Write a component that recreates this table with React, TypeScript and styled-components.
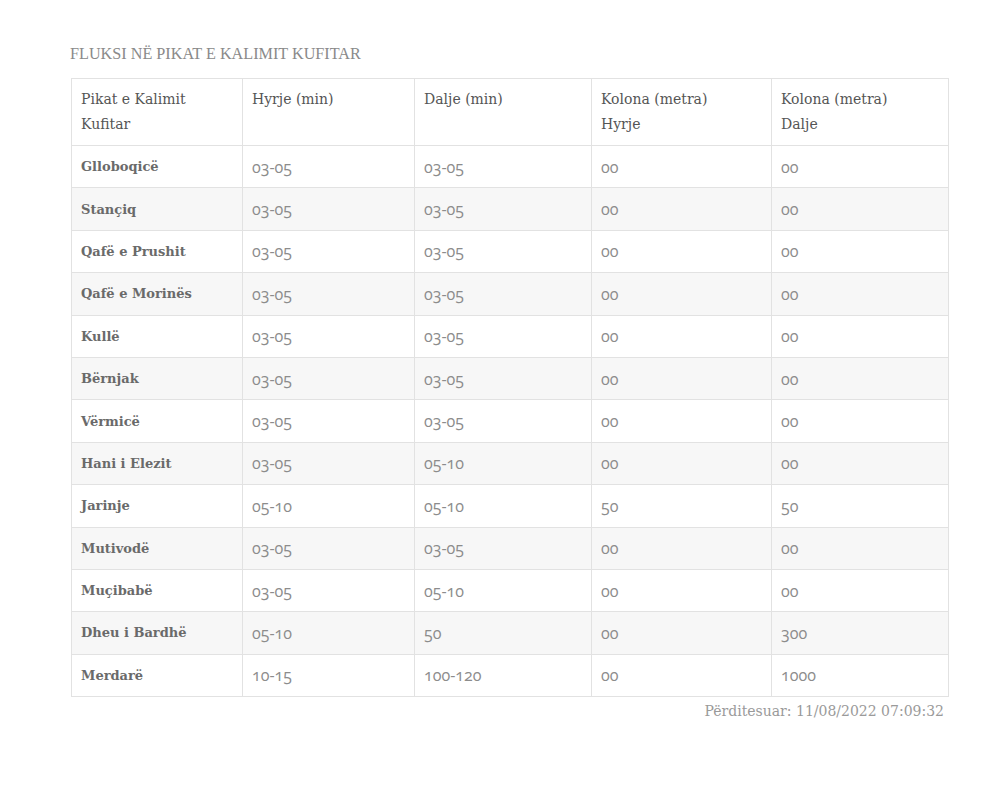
import React from "react";
import styled, { createGlobalStyle } from "styled-components";

const Global = createGlobalStyle`
  html, body { margin: 0; padding: 0; background: #fff; }
  body { font-family: "DejaVu Serif", "Liberation Serif", serif; }
`;

const Page = styled.div`
  width: 1000px;
  height: 793px;
  box-sizing: border-box;
  padding: 44px 52px 0 71px;
`;

const Title = styled.h2`
  margin: 0 0 14px -1px;
  font-family: "Liberation Serif", serif;
  font-weight: 400;
  font-size: 16.2px;
  line-height: 20px;
  color: #8a8a8a;
`;

const Table = styled.table`
  width: 877px;
  border-collapse: collapse;
  table-layout: fixed;
  border: 1px solid #e2e2e2;
`;

const Th = styled.th`
  text-align: left;
  vertical-align: top;
  font-weight: 400;
  font-size: 14px;
  line-height: 25px;
  color: #555;
  padding: 8px 9px 8px 9px;
  border: 1px solid #e2e2e2;
  height: 50px;
`;

const Row = styled.tr<{ $striped: boolean }>`
  background: ${(p) => (p.$striped ? "#f7f7f7" : "#fff")};
`;

const NameCell = styled.td`
  font-size: 13px;
  font-weight: 700;
  color: #6a6a6a;
  padding: 0 9px;
  height: 41.4px;
  border: 1px solid #e2e2e2;
`;

const Cell = styled.td`
  font-family: "Open Sans", sans-serif;
  font-variant-numeric: oldstyle-nums;
  font-feature-settings: "onum" 1;
  font-size: 16px;
  color: #8c8c8c;
  padding: 0 9px;
  border: 1px solid #e2e2e2;
`;

const Footer = styled.div`
  text-align: right;
  font-family: "DejaVu Serif", serif;
  font-size: 14px;
  color: #9a9a9a;
  margin-top: 6px;
  padding-right: 4px;
  width: 877px;
  box-sizing: border-box;
`;

const rows: [string, string, string, string, string][] = [
  ["Glloboqicë", "03-05", "03-05", "00", "00"],
  ["Stançiq", "03-05", "03-05", "00", "00"],
  ["Qafë e Prushit", "03-05", "03-05", "00", "00"],
  ["Qafë e Morinës", "03-05", "03-05", "00", "00"],
  ["Kullë", "03-05", "03-05", "00", "00"],
  ["Bërnjak", "03-05", "03-05", "00", "00"],
  ["Vërmicë", "03-05", "03-05", "00", "00"],
  ["Hani i Elezit", "03-05", "05-10", "00", "00"],
  ["Jarinje", "05-10", "05-10", "50", "50"],
  ["Mutivodë", "03-05", "03-05", "00", "00"],
  ["Muçibabë", "03-05", "05-10", "00", "00"],
  ["Dheu i Bardhë", "05-10", "50", "00", "300"],
  ["Merdarë", "10-15", "100-120", "00", "1000"],
];

export default function App() {
  return (
    <Page>
      <Global />
      <Title>FLUKSI NË PIKAT E KALIMIT KUFITAR</Title>
      <Table>
        <colgroup>
          <col style={{ width: 171 }} />
          <col style={{ width: 172 }} />
          <col style={{ width: 177 }} />
          <col style={{ width: 180 }} />
          <col style={{ width: 177 }} />
        </colgroup>
        <thead>
          <tr>
            <Th>Pikat e Kalimit<br />Kufitar</Th>
            <Th>Hyrje (min)</Th>
            <Th>Dalje (min)</Th>
            <Th>Kolona (metra)<br />Hyrje</Th>
            <Th>Kolona (metra)<br />Dalje</Th>
          </tr>
        </thead>
        <tbody>
          {rows.map((r, i) => (
            <Row key={r[0]} $striped={i % 2 === 1}>
              <NameCell>{r[0]}</NameCell>
              <Cell>{r[1]}</Cell>
              <Cell>{r[2]}</Cell>
              <Cell>{r[3]}</Cell>
              <Cell>{r[4]}</Cell>
            </Row>
          ))}
        </tbody>
      </Table>
      <Footer>Përditesuar: 11/08/2022 07:09:32</Footer>
    </Page>
  );
}
